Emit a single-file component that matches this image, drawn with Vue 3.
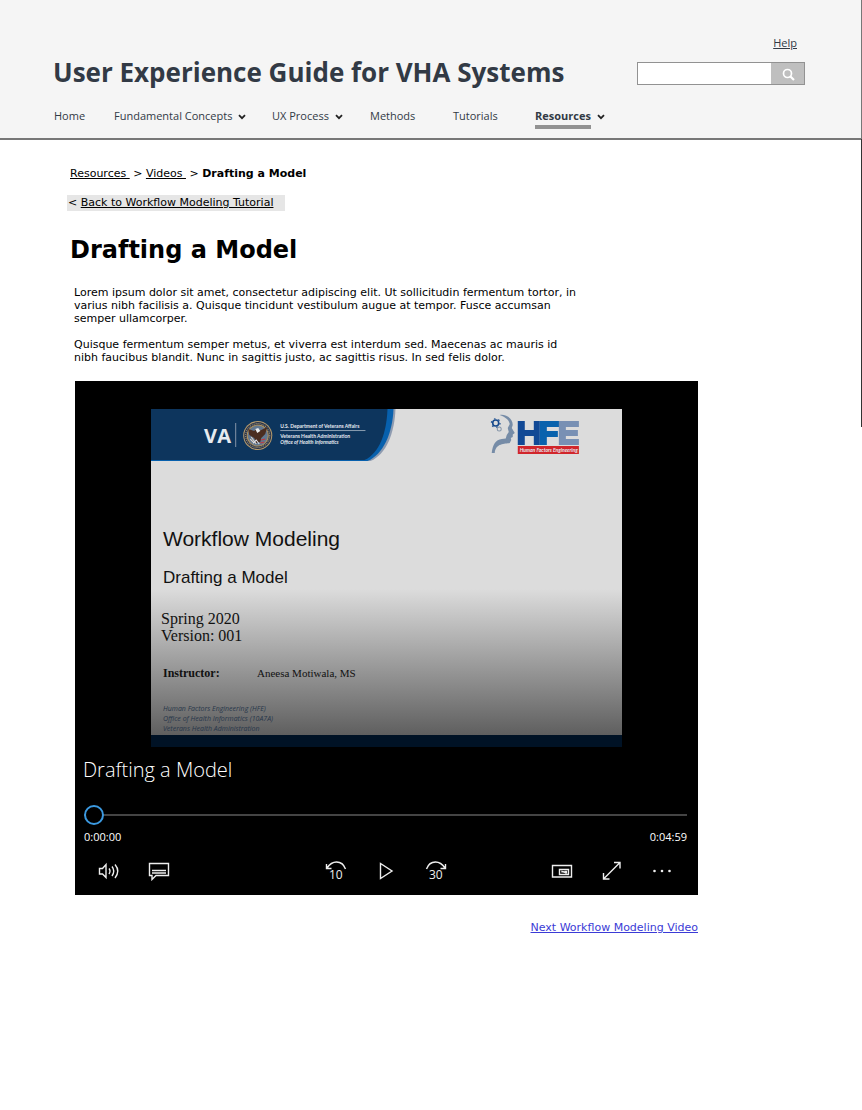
<script setup>
const nav = [
  { label: 'Home' },
  { label: 'Fundamental Concepts', menu: true },
  { label: 'UX Process', menu: true },
  { label: 'Methods' },
  { label: 'Tutorials' },
  { label: 'Resources', menu: true, current: true },
]
</script>

<template>
  <div class="page">
    <header class="site-header">
      <div class="top">
        <h1 class="site-title">User Experience Guide for VHA Systems</h1>
        <div class="tools">
          <a href="#help" class="help">Help</a>
          <form class="search" role="search" @submit.prevent>
            <input type="text" aria-label="Search" />
            <button type="submit" aria-label="Search">
              <svg width="14" height="14" viewBox="0 0 14 14" fill="none" stroke="#fff">
                <circle cx="5.5" cy="5.5" r="4" stroke-width="1.7" />
                <path d="M8.5 8.5 12 12" stroke-width="2.2" />
              </svg>
            </button>
          </form>
        </div>
      </div>
      <nav class="nav" aria-label="Main">
        <div v-for="item in nav" :key="item.label" class="nav-item">
          <a href="#" :class="{ current: item.current }">{{ item.label }}</a>
          <svg v-if="item.menu" class="chevron" width="8" height="6" viewBox="0 0 8 6" fill="none" stroke="#222" stroke-width="1.8">
            <path d="M1 1.2 4 4.2 7 1.2" />
          </svg>
        </div>
      </nav>
    </header>

    <main class="content">
      <nav class="crumbs" aria-label="Breadcrumb">
        <a href="#resources">Resources&nbsp;</a> &gt; <a href="#videos">Videos&nbsp;</a> &gt; <strong>Drafting a Model</strong>
      </nav>
      <div class="back">&lt; <a href="#tutorial">Back to Workflow Modeling Tutorial</a></div>
      <h2 class="title">Drafting a Model</h2>
      <div class="intro">
        <p>Lorem ipsum dolor sit amet, consectetur adipiscing elit. Ut sollicitudin fermentum tortor, in varius nibh facilisis a. Quisque tincidunt vestibulum augue at tempor. Fusce accumsan semper ullamcorper.</p>
        <p>Quisque fermentum semper metus, et viverra est interdum sed. Maecenas ac mauris id nibh faucibus blandit. Nunc in sagittis justo, ac sagittis risus. In sed felis dolor.</p>
      </div>

      <section class="player" aria-label="Video player">
        <div class="slide">
          <svg class="banner" viewBox="0 0 470 106">
            <path d="M0 0H244C243 24 235 45 219 52H0Z" fill="#8e9bb0" />
            <path d="M0 0H242C241 24 232 45 216 52H0Z" fill="#0760ad" />
            <path d="M0 0H236C235 24 228 44 213 51H0Z" fill="#0d355d" />
            <text class="va" x="53" y="34">VA</text>
            <path d="M84.500 14V38" stroke="#8493a8" />
            <circle cx="106.500" cy="26.500" r="14.500" fill="#b79b6c" />
            <circle cx="106.500" cy="26.500" r="13.500" fill="#29344a" />
            <circle cx="106.500" cy="26.500" r="12" fill="none" stroke="#a69b83" stroke-dasharray="1 1" />
            <circle cx="106.500" cy="26.500" r="10.500" fill="#627891" stroke="#b1935d" />
            <path d="M97 20 103 22 105 20 108 22 116 18 114 25 110 29 109 33 105 34 103 29 98 26Z" fill="#4b2d20" />
            <path d="M104 20 107 19 109 22 106 24Z" fill="#eee" />
            <path d="M99 30 103 34M100 28 105 35" stroke="#e5d7ca" />
            <path d="M110 31 114 30M109 34 113 33" stroke="#c6343b" />
            <path d="M102 34 105 31 108 35" fill="none" stroke="#dfe5ec" />
            <text class="dept bold" x="129" y="19">U.S. Department of Veterans Affairs</text>
            <path d="M129 21.500H214" stroke="#aab6c4" stroke-width=".8" />
            <text class="dept bold" x="129" y="29">Veterans Health Administration</text>
            <text class="dept italic" x="129" y="35">Office of Health Informatics</text>
            <path d="M348 6C354 5 361 9 361 16L360 19 363 24 361 25.500 361 28 359 29 359.500 31 358 34C353 35 344 34 343 44H340C341 35 344 31 350 30L354 29.500 355 26 357 23 356 19 358 15C357 10 353 8 348 6Z" fill="#768ca7" />
            <circle cx="344" cy="14" r="3" fill="none" stroke="#174a8d" stroke-width="1.600" />
            <circle cx="344" cy="14" r="4.300" fill="none" stroke="#174a8d" stroke-width="1.200" stroke-dasharray="1.500 3" />
            <circle cx="347.500" cy="20" r="2" fill="none" stroke="#8797aa" />
            <path d="M366 12h7v9h9v-9h6v24h-6v-9h-9v9h-7Z" fill="#124995" />
            <path d="M388 12h20v6h-13v4h11v6h-11v8h-7Z" fill="#0862ad" />
            <path d="M407 12h20v6h-13v3h12v6h-12v3h13v6h-20Z" fill="#7890b4" />
            <path d="M366 37h61v8h-61Z" fill="#d1262b" />
            <text class="hfe" x="368" y="43">Human Factors Engineering</text>
          </svg>
          <div class="slide-text">
            <h3>Workflow Modeling</h3>
            <h4>Drafting a Model</h4>
            <p class="version">Spring 2020<br />Version: 001</p>
            <p class="instructor"><b>Instructor:</b><span>Aneesa Motiwala, MS</span></p>
            <p class="org">Human Factors Engineering (HFE)<br />Office of Health Informatics (10A7A)<br />Veterans Health Administration</p>
          </div>
          <div class="slide-foot"></div>
        </div>

        <div class="video-title">Drafting a Model</div>
        <input class="seek" type="range" min="0" max="299" value="0" aria-label="Seek" />
        <div class="times"><span>0:00:00</span><span>0:04:59</span></div>
        <div class="controls">
          <div class="group left">
            <button type="button" aria-label="Volume">
              <svg width="22" height="20" viewBox="0 0 22 20">
                <path d="M1.500 7.500V13H4.500L8 16.500V3.500L4.500 7.500Z" />
                <path d="M11 7.500Q13 10 11 13M14 5.500Q17.500 10 14 15M17 3.500Q22.500 10 17 17" />
              </svg>
            </button>
            <button type="button" aria-label="Captions">
              <svg width="22" height="20" viewBox="0 0 22 20">
                <path d="M1.500 2.500H20.500V14.500H8L4 18.500V14.500H1.500ZM4 9.500H18M4 12H18" />
              </svg>
            </button>
          </div>
          <div class="group mid">
            <button type="button" aria-label="Back 10 seconds">
              <svg width="22" height="22" viewBox="0 0 22 22">
                <path d="M1.500 4V8.500H6.500M2 8Q6 2 11.500 2Q18 2 20.500 9" />
                <text x="4" y="19">10</text>
              </svg>
            </button>
            <button type="button" aria-label="Play">
              <svg width="22" height="20" viewBox="0 0 22 20"><path d="M5.500 2.500V17.500L17 10Z" /></svg>
            </button>
            <button type="button" aria-label="Forward 30 seconds">
              <svg width="22" height="22" viewBox="0 0 22 22">
                <path d="M20.500 4V8.500H15.500M20 8Q16 2 10.500 2Q4 2 1.500 9" />
                <text x="4" y="19">30</text>
              </svg>
            </button>
          </div>
          <div class="group right">
            <button type="button" aria-label="Mini view">
              <svg width="22" height="20" viewBox="0 0 22 20">
                <path d="M1.500 4.500H20.500V16H1.500ZM8.500 8.500H17.500V13.500H8.500Z" />
                <path d="M11 11.500V10.500L13 11 15.500 12.500M13.500 10.500H15.500V12.500" />
              </svg>
            </button>
            <button type="button" aria-label="Full screen">
              <svg width="22" height="20" viewBox="0 0 22 20">
                <path d="M2.500 18 19 1.500M13 1.500H19V7.500M2.500 12V18H8.500" />
              </svg>
            </button>
            <button type="button" aria-label="More">
              <svg class="dots" width="22" height="20" viewBox="0 0 22 20">
                <circle cx="3.500" cy="10" r="1.300" /><circle cx="11" cy="10" r="1.300" /><circle cx="18.500" cy="10" r="1.300" />
              </svg>
            </button>
          </div>
        </div>
      </section>
      <div class="next"><a href="#next">Next Workflow Modeling Video</a></div>
    </main>
    <div class="edge"></div>
  </div>
</template>

<style>
body { margin: 0; background: #fff; }
</style>

<style scoped>
* { box-sizing: border-box; }
h1, h2, h3, h4, p { margin: 0; }
.page { position: relative; font-family: "DejaVu Sans", Verdana, sans-serif; font-size: 11px; line-height: 13px; color: #000; }
.edge { position: absolute; top: 0; right: 0; width: 1px; height: 427px; background: linear-gradient(#777 0 139px, #333 139px); }

.site-header { background: #f5f5f5; border-bottom: 2px solid #777; padding: 34px 57px 9px 53px; font-family: "Open Sans", "Noto Sans", sans-serif; color: #323a45; }
.top { display: flex; justify-content: space-between; align-items: flex-end; }
.site-title { font-size: 26px; line-height: 34px; font-weight: 700; white-space: nowrap; }
.tools { display: flex; flex-direction: column; gap: 10px; width: 168px; flex: none; padding-bottom: 4px; }
.help { align-self: flex-end; margin-right: 8px; font-size: 11px; line-height: 18px; color: #323a45; }
.search { display: flex; height: 23px; border: 1px solid #929292; }
.search input { flex: 1; min-width: 0; border: 0; padding: 0 4px; background: #fff; }
.search button { width: 33px; border: 0; padding: 2px 0 0 3px; background: #bfbfbf; display: flex; align-items: center; justify-content: center; }
.nav { display: grid; grid-template-columns: 60px 158px 98px 83px 82px auto; padding-top: 18px; padding-left: 1px; }
.nav-item { display: flex; align-items: flex-start; gap: 6px; font-size: 11px; line-height: 18px; white-space: nowrap; }
.nav-item a { color: #323a45; text-decoration: none; }
.nav-item a.current { font-weight: 700; border-bottom: 4px solid #929292; }
.chevron { margin-top: 7px; flex: none; }

.content { max-width: 768px; padding: 27px 69px 40px; }
.crumbs a { color: #000; }
.crumbs { line-height: 14px; padding-left: 1px; }
.back { width: fit-content; margin: 14px 0 0 -2px; padding: 1px 12px 1px 1px; line-height: 14px; background: #e6e6e6; }
.back a { color: #000; }
.title { font-size: 24px; line-height: 32px; margin-top: 23px; padding-left: 1px; }
.intro { max-width: 513px; padding-left: 5px; margin-top: 20px; }
.intro p + p { margin-top: 13px; }

.player { width: 100%; max-width: 623px; margin: 17px 0 0 6px; padding: 28px 0 10px; background: #000; color: #fff; font-family: "Open Sans", "Noto Sans", sans-serif; }
.slide { width: 76%; max-width: 471px; margin: 0 auto; background: linear-gradient(#dcdcdc 0 180px, #5f5f5f 326px); color: #111; }
.banner { display: block; width: 100%; }
.banner text { fill: #e6eaf0; }
.va { font: 700 20px "Open Sans", sans-serif; }
.dept { font: 5px Lato, sans-serif; }
.bold { font-weight: 700; }
.italic { font-style: italic; font-weight: 700; }
.hfe { font: italic 700 5px Lato, sans-serif; }
.slide-text { padding: 11px 10px 1px; }
.slide-text h3, .slide-text h4 { font-family: "Liberation Sans", Arial, sans-serif; font-weight: 400; padding-left: 2px; }
.slide-text h3 { font-size: 21px; line-height: 26px; }
.slide-text h4 { font-size: 17px; line-height: 20px; margin-top: 16px; }
.version { font: 16px/17px "Liberation Serif", Georgia, serif; margin-top: 22px; }
.instructor { display: flex; font: 11px/14px "Liberation Serif", Georgia, serif; margin-top: 22px; padding-left: 2px; }
.instructor b { width: 94px; font-size: 12px; }
.org { font: italic 7px/10px "Open Sans", sans-serif; color: #27364a; margin-top: 24px; padding-left: 2px; }
.slide-foot { height: 12px; background: #001225; }

.video-title { font-size: 20px; line-height: 28px; font-weight: 300; padding-left: 8px; margin-top: 9px; }
.seek { appearance: none; display: block; width: calc(100% - 20px); height: 20px; margin: 21px 0 0 9px; background: linear-gradient(#444, #444) center / 100% 2px no-repeat; }
.seek::-webkit-slider-thumb { appearance: none; width: 20px; height: 20px; border: 2px solid #3b99e0; border-radius: 50%; background: #000; }
.times { display: flex; justify-content: space-between; font-size: 11px; line-height: 16px; padding: 0 11px 0 9px; margin-top: 4px; }
.controls { display: grid; grid-template-columns: 1fr auto 1fr; margin-top: 12px; padding: 0 22px 0 20px; }
.group { display: flex; gap: 22px; }
.right { justify-content: flex-end; }
.controls button { width: 28px; height: 28px; padding: 0; border: 0; background: none; display: flex; align-items: center; justify-content: center; }
.controls svg { fill: none; stroke: #eee; stroke-width: 1.4; }
.controls svg text { fill: #eee; stroke: none; font: 12px "Open Sans", sans-serif; }
.controls .dots { fill: #eee; stroke: none; }
.next { max-width: 629px; margin-top: 26px; text-align: right; }
.next a { color: #3b3bd6; }
</style>
